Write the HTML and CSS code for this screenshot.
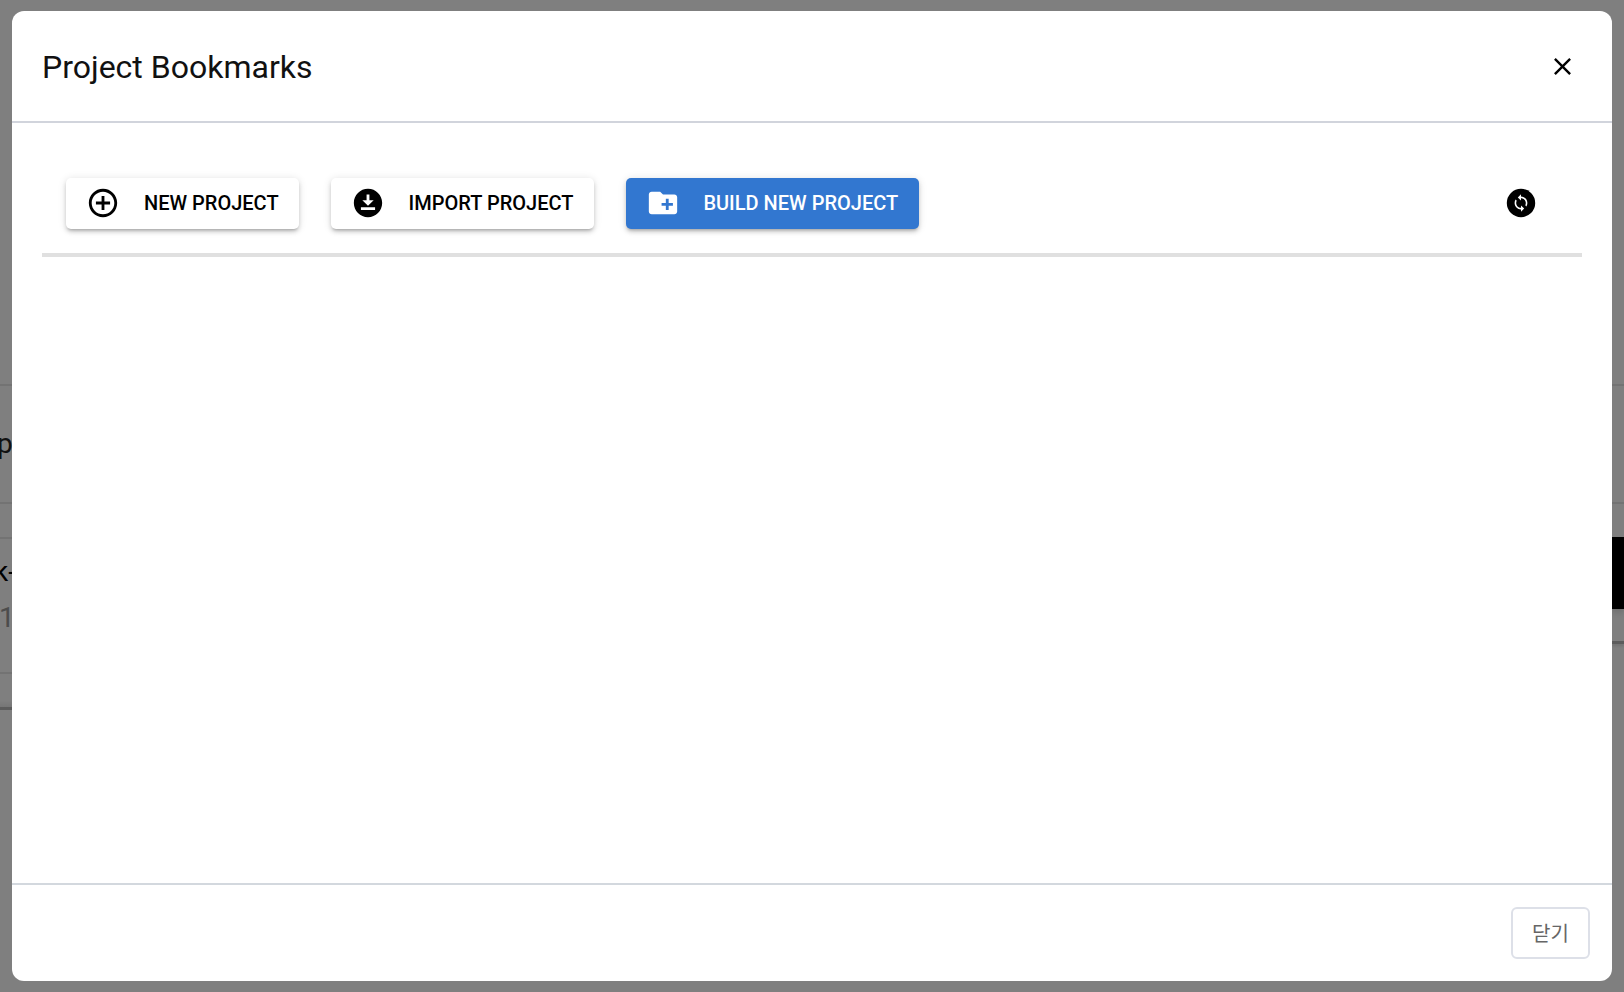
FILE: index.html
```html
<!DOCTYPE html>
<html lang="en">
<head>
<meta charset="utf-8">
<title>Project Bookmarks</title>
<link rel="stylesheet" href="styles.css">
</head>
<body>
<div class="page">
  <div class="rail rail-left">
    <div class="band band-one"><span class="peek peek-p">p</span></div>
    <div class="band band-two">
      <span class="peek peek-k">k-</span>
      <span class="peek peek-num">1</span>
    </div>
    <div class="band band-three"></div>
  </div>
  <div class="rail rail-right">
    <div class="band band-one"></div>
    <div class="band band-black"></div>
    <div class="band band-four"></div>
  </div>
</div>
<div class="backdrop"></div>
<div class="modal">
  <header class="modal-header">
    <h1 class="modal-title">Project Bookmarks</h1>
    <button class="icon-btn close-btn" aria-label="Close">
      <svg class="icon-close" viewBox="0 0 24 24"><path d="M19 6.41 17.59 5 12 10.59 6.41 5 5 6.41 10.59 12 5 17.59 6.41 19 12 13.41 17.59 19 19 17.59 13.41 12z"/></svg>
    </button>
  </header>
  <main class="modal-body">
    <div class="toolbar">
      <button class="btn">
        <svg class="btn-icon" viewBox="0 0 24 24"><path d="M13 7h-2v4H7v2h4v4h2v-4h4v-2h-4V7zm-1-5C6.48 2 2 6.48 2 12s4.48 10 10 10 10-4.48 10-10S17.52 2 12 2zm0 18c-4.41 0-8-3.59-8-8s3.59-8 8-8 8 3.59 8 8-3.59 8-8 8z"/></svg>
        NEW PROJECT
      </button>
      <button class="btn btn-import">
        <svg class="btn-icon" viewBox="0 0 24 24"><path d="M12 2C6.49 2 2 6.49 2 12s4.49 10 10 10 10-4.49 10-10S17.51 2 12 2zm-1 8V6h2v4h3l-4 4-4-4h3zm6 7H7v-2h10v2z"/></svg>
        IMPORT PROJECT
      </button>
      <button class="btn btn-primary">
        <svg class="btn-icon" viewBox="0 0 24 24"><path d="M20 6h-8l-2-2H4c-1.11 0-1.99.89-1.99 2L2 18c0 1.11.89 2 2 2h16c1.11 0 2-.89 2-2V8c0-1.11-.89-2-2-2zm-1 8h-3v3h-2v-3h-3v-2h3V9h2v3h3v2z"/></svg>
        BUILD NEW PROJECT
      </button>
      <button class="icon-btn refresh-btn" aria-label="Refresh">
        <svg class="btn-icon" viewBox="0 0 34 34">
          <circle cx="17" cy="17" r="14.2"/>
          <path class="sync" transform="translate(7.4 7.4) scale(0.8)" d="M12 4V1L8 5l4 4V6c3.31 0 6 2.69 6 6 0 1.01-.25 1.97-.7 2.8l1.46 1.46C19.54 15.03 20 13.57 20 12c0-4.42-3.58-8-8-8zm0 14c-3.31 0-6-2.69-6-6 0-1.01.25-1.97.7-2.8L5.24 7.74C4.46 8.97 4 10.43 4 12c0 4.42 3.58 8 8 8v3l4-4-4-4v3z"/>
        </svg>
      </button>
    </div>
    <div class="divider"></div>
  </main>
  <footer class="modal-footer">
    <button class="btn-close-text">닫기</button>
  </footer>
</div>
</body>
</html>
```
FILE: styles.css
```css
* { box-sizing: border-box; }
html, body { margin: 0; height: 100%; }
body {
  background: #fff;
  overflow: hidden;
  font-family: Roboto, "Noto Sans CJK KR", sans-serif;
}
.page {
  height: 992px;
  display: flex;
  justify-content: space-between;
  padding-top: 384px;
}
.rail { width: 12px; overflow: hidden; display: flex; flex-direction: column; }
.band { width: 100%; }
.band-one { height: 120px; border-top: 2px solid #e6e6e6; border-bottom: 2px solid #e6e6e6; display: flex; align-items: center; }
.rail-left .band-two {
  margin-top: 33px;
  height: 137px;
  border-top: 2px solid #e6e6e6;
  border-bottom: 2px solid #e6e6e6;
  display: flex;
  flex-direction: column;
  padding-top: 15px;
}
.band-three { height: 36px; border-bottom: 3px solid #b8b8b8; background: linear-gradient(to bottom, #fff 80%, #ececec); }
.band-black { margin-top: 33px; height: 72px; background: #000; box-shadow: 0 4px 6px rgba(0,0,0,.12); }
.band-four { margin-top: 32px; height: 3px; background: #b8b8b8; box-shadow: 0 2px 3px rgba(0,0,0,.12); }
.peek { font-size: 28px; line-height: 36px; white-space: nowrap; }
.peek-p { color: #222; margin-left: -3px; }
.peek-k { color: #000; margin-left: -6px; }
.peek-num { color: #999; margin-top: 10px; margin-left: -1px; }
.backdrop { position: fixed; inset: 0; background: rgba(0, 0, 0, .5); }
.modal {
  position: fixed;
  left: 12px;
  top: 11px;
  width: 1600px;
  height: 970px;
  background: #fff;
  border-radius: 12px;
  display: flex;
  flex-direction: column;
}
.modal-header {
  height: 112px;
  flex: none;
  border-bottom: 2px solid #d1d4dc;
  display: flex;
  align-items: center;
  justify-content: space-between;
  padding: 0 35px 0 30px;
}
.modal-title {
  margin: 2px 0 0;
  font-size: 32px;
  font-weight: 400;
  color: #111;
  line-height: 40px;
}
.icon-btn { border: 0; background: none; padding: 0; display: flex; cursor: pointer; }
.icon-close { width: 29px; height: 29px; fill: #000; display: block; }
.modal-body { flex: 1; padding: 55px 30px 0; }
.toolbar { display: flex; gap: 32px; align-items: center; padding: 0 24px; }
.btn {
  height: 51px;
  border: 0;
  border-radius: 5px;
  background: #fff;
  color: #000;
  display: flex;
  align-items: center;
  gap: 24px;
  padding: 0 20px 1px;
  font-family: inherit;
  font-size: 20px;
  font-weight: 500;
  white-space: nowrap;
  box-shadow: 0 3px 3px -2px rgba(0,0,0,.2), 0 3px 4px 0 rgba(0,0,0,.14), 0 1px 8px 0 rgba(0,0,0,.12);
}
.btn-import { padding-right: 21px; }
.btn-primary { background: #3277d0; color: #fff; gap: 23px; padding-right: 21px; }
.btn-icon { width: 34px; height: 34px; fill: currentColor; flex: none; display: block; }
.refresh-btn { margin-left: auto; margin-right: 20px; margin-top: -1px; color: #000; }
.sync { fill: #fff; }
.divider { height: 4px; background: #e0e0e0; margin-top: 24px; }
.modal-footer {
  height: 98px;
  flex: none;
  border-top: 2px solid #d3d8de;
  display: flex;
  justify-content: flex-end;
  padding: 22px 22px 0 0;
}
.btn-close-text {
  width: 79px;
  height: 52px;
  border: 2px solid #dde0e8;
  border-radius: 6px;
  background: #fff;
  color: #666;
  font-family: "Noto Sans CJK KR", sans-serif;
  font-size: 20px;
  padding: 0 0 2px;
}
```
